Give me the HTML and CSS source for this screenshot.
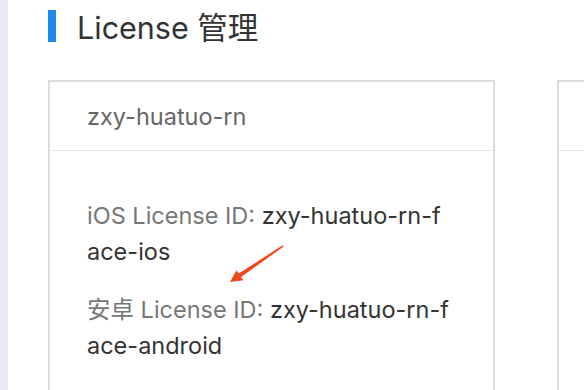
FILE: index.html
```html
<!DOCTYPE html>
<html lang="zh-CN">
<head>
  <meta charset="UTF-8" />
  <meta name="viewport" content="width=device-width, initial-scale=1.0"/>
  <title>License 管理</title>
  <link rel="stylesheet" href="styles.css">
</head>
<body>
  <div class="layout">
    <aside class="sider"></aside>

    <main class="content">
      <h1 class="page-title"><span class="title-bar"></span>License 管理</h1>

      <div class="card-list">
        <div class="card">
          <div class="card-head">zxy-huatuo-rn</div>
          <div class="card-body">
            <p><span class="label">iOS License ID:</span> <span class="value">zxy-huatuo-rn-face-ios</span></p>
            <p><span class="label">安卓 License ID:</span> <span class="value">zxy-huatuo-rn-face-android</span></p>
            <p><span class="label">created at:</span> <span class="value">2019-09-27</span></p>
          </div>
        </div>

        <div class="card">
          <div class="card-head">zxy-huatuo-web</div>
          <div class="card-body"></div>
        </div>
      </div>
    </main>
  </div>

  <!-- annotation arrow drawn over the screenshot -->
  <svg class="mark-arrow" width="584" height="390" viewBox="0 0 584 390">
    <polygon fill="#f2461d"
      points="282.6,245.3 238.8,273.6 236.5,270.3 230,282 243.3,280.3 241,276.9 283.4,246.7"/>
  </svg>
</body>
</html>
```

FILE: styles.css
```css
body {
  margin: 0;
  font-family: Inter, "Noto Sans CJK SC", sans-serif;
  background: #fff;
  color: #333;
  overflow: hidden;
}
.layout {
  display: flex;
  min-height: 390px;
}
.sider {
  width: 8px;
  flex-shrink: 0;
  background: #e8ebf0;
}
.content {
  flex: 1;
  padding: 10px 0 0 40px;
  overflow: hidden;
}
.page-title {
  display: flex;
  align-items: center;
  margin: 0;
  height: 32px;
  font-size: 30.5px;
  font-weight: normal;
  color: #333;
}
.title-bar {
  width: 8px;
  height: 32px;
  margin-right: 21px;
  background: #2089ec;
}
.card-list {
  display: flex;
  gap: 62px;
  margin-top: 38px;
}
.card {
  width: 447px;
  flex-shrink: 0;
  box-sizing: border-box;
  border: 2px solid #dcdcdc;
  border-bottom: none;
  min-height: 320px;
}
.card-head {
  height: 68px;
  display: flex;
  align-items: center;
  padding-left: 37px;
  font-size: 23.5px;
  color: #666;
  border-bottom: 1px solid #e6e8ee;
}
.card-body {
  padding: 47px 44px 0 37px;
  font-size: 23.5px;
  line-height: 36px;
  word-break: break-all;
}
.card-body p {
  margin: 0 0 22px;
}
.label {
  color: #777;
}
.value {
  color: #333;
}
.mark-arrow {
  position: absolute;
  left: 0;
  top: 0;
}
```
